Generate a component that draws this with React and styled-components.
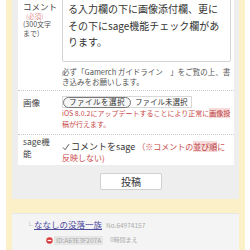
import styled, { createGlobalStyle } from 'styled-components';

const GlobalStyle = createGlobalStyle`
  body {
    margin: 0;
    background: #fff;
    font-family: "Noto Sans CJK JP", "Noto Sans", sans-serif;
    color: #444;
    overflow: hidden;
  }
`;

const Page = styled.div`
  padding: 0 5px 0 6px;
  height: 250px;
  overflow: hidden;
`;

const Frame = styled.div`
  margin-top: -8px;
  background: #fcf0c9;
  padding: 0 6px 40px;
`;

const FormPanel = styled.div`
  background: #eeeeee;
  padding: 0 5px 9px 6px;
`;

const Row = styled.div`
  display: grid;
  grid-template-columns: 39px 1fr;
  background: #fff;
  padding: ${(p) => p.$pad || '6px 3px 6px 5px'};
  border-bottom: ${(p) => (p.$last ? 'none' : '1px dotted #c8c8c8')};
`;

const Cell = styled.div`
  font-size: 8px;
  line-height: 11px;
`;

const Label = styled.div`
  font-size: 8.5px;
  line-height: ${(p) => p.$lh || '12px'};
  color: #444;
  padding-top: ${(p) => p.$top || '0'};
`;

const Required = styled.div`
  font-size: 6.5px;
  line-height: 8px;
  color: #e39191;
  padding-left: 3px;
`;

const Limit = styled.div`
  font-size: 7px;
  line-height: 9px;
  color: #555;
`;

const TextArea = styled.textarea`
  display: block;
  box-sizing: border-box;
  width: 100%;
  height: 64px;
  margin: 0;
  padding: 2px 5px 4px;
  border: 1px solid #d4d4d4;
  border-radius: 2px;
  font: inherit;
  font-size: 10px;
  line-height: 16.5px;
  color: #333;
  resize: none;
  overflow: hidden;
  background: #fff;
`;

const Note = styled.p`
  margin: 5px 0 0;
  font-size: 7.5px;
  line-height: 10px;
  color: #555;
`;

const FileBox = styled.div`
  display: flex;
  align-items: center;
  gap: 4px;
  width: fit-content;
  height: 10px;
  border: 1px solid #d8d8d8;
  padding-right: 3px;
  font-size: 7.5px;
  line-height: 10px;
  color: #333;
`;

const FileButton = styled.span`
  display: inline-flex;
  align-items: center;
  height: 11px;
  box-sizing: border-box;
  padding: 0 5px;
  border: 1px solid #777;
  border-radius: 6px;
  background: #f6f6f6;
  letter-spacing: 0.5px;
`;

const Warning = styled.div`
  font-size: 7px;
  line-height: 11px;
  color: #c94848;
`;

const Mark = styled.span`
  background: #f7dada;
  color: #b83a3a;
`;

const SageLine = styled.div`
  padding-top: 5px;
  font-size: 9px;
  line-height: 11px;
  color: #333;
`;

const Check = styled.svg`
  width: 8px;
  height: 8px;
  margin-right: 1px;
  vertical-align: -0.5px;
`;

const RedText = styled.span`
  font-size: 8px;
  color: #c94848;
`;

const SubmitBar = styled.div`
  display: flex;
  justify-content: center;
  padding-top: 8px;
  padding-left: 10px;
`;

const SubmitButton = styled.button`
  width: 62px;
  height: 17px;
  padding: 0;
  background: #fff;
  border: 1px solid #d0d0d0;
  border-radius: 2px;
  font-family: inherit;
  font-size: 10px;
  color: #333;
`;

const Card = styled.div`
  margin-top: 14px;
  background: #f4f4f4;
  border-top: 1px solid #e6e6e6;
  padding: 4px 6px 6px 14px;
`;

const NameLine = styled.div`
  display: flex;
  align-items: baseline;
  gap: 2px;
  line-height: 12px;
`;

const Corner = styled.span`
  font-size: 7px;
  color: #999;
  width: 6px;
`;

const NameLink = styled.a`
  font-size: 8.5px;
  color: #4f4c9e;
  text-decoration: underline;
`;

const PostNo = styled.span`
  margin-left: 2px;
  font-size: 6.5px;
  color: #aaa;
`;

const MetaLine = styled.div`
  display: flex;
  align-items: center;
  gap: 1px;
  margin: 3px 0 0 20px;
  line-height: 12px;
`;

const IdBadge = styled.span`
  background: #e6e6e6;
  color: #a5a5a5;
  font-size: 6.5px;
  line-height: 9px;
  padding: 0 2px;
`;

const Time = styled.span`
  margin-left: 6px;
  font-size: 6px;
  color: #aaa;
`;

const comment = 'る入力欄の下に画像添付欄、更に\nその下にsage機能チェック欄があ\nります。';

export default function App() {
  return (
    <Page>
      <GlobalStyle />
      <Frame>
        <FormPanel>
          <Row $pad="6px 3px 3px 5px">
            <Cell>
              <Label $lh="11px" $top="3px">コメント</Label>
              <Required>(必須)</Required>
              <Limit>(300文字<br />まで)</Limit>
            </Cell>
            <Cell>
              <TextArea readOnly value={comment} />
              <Note>
                必ず「Gamerch ガイドライン　」をご覧の上、書き込みをお願いします。
              </Note>
            </Cell>
          </Row>
          <Row $pad="5px 3px 4px 5px">
            <Label>画像</Label>
            <Cell>
              <FileBox>
                <FileButton>ファイルを選択</FileButton>
                ファイル未選択
              </FileBox>
              <Warning>
                iOS 8.0.2にアップデートすることにより正常に<Mark>画像投</Mark>稿が行えます。
              </Warning>
            </Cell>
          </Row>
          <Row $pad="1px 3px 2px 5px" $last>
            <Label $lh="11.5px">sage機<br />能</Label>
            <SageLine>
              <Check viewBox="0 0 10 10">
                <path d="M1.2 5.6 L3.9 8.4 L8.9 1.4" fill="none" stroke="#555" strokeWidth="1.2" />
              </Check>
              コメントをsage <RedText>（※コメントの<Mark>並び順</Mark>に反映しない)</RedText>
            </SageLine>
          </Row>
          <SubmitBar>
            <SubmitButton type="button">投稿</SubmitButton>
          </SubmitBar>
        </FormPanel>
        <Card>
          <NameLine>
            <Corner>└</Corner>
            <NameLink href="#">ななしの没落一族</NameLink>
            <PostNo>No.64974157</PostNo>
          </NameLine>
          <MetaLine>
            <svg width="7" height="7" viewBox="0 0 10 10">
              <circle cx="5" cy="5" r="4.6" fill="#d83b3b" />
              <rect x="2.3" y="4.1" width="5.4" height="1.8" fill="#fff" />
            </svg>
            <IdBadge>ID:A63E3F207A</IdBadge>
            <Time>0時間まえ</Time>
          </MetaLine>
        </Card>
      </Frame>
    </Page>
  );
}
